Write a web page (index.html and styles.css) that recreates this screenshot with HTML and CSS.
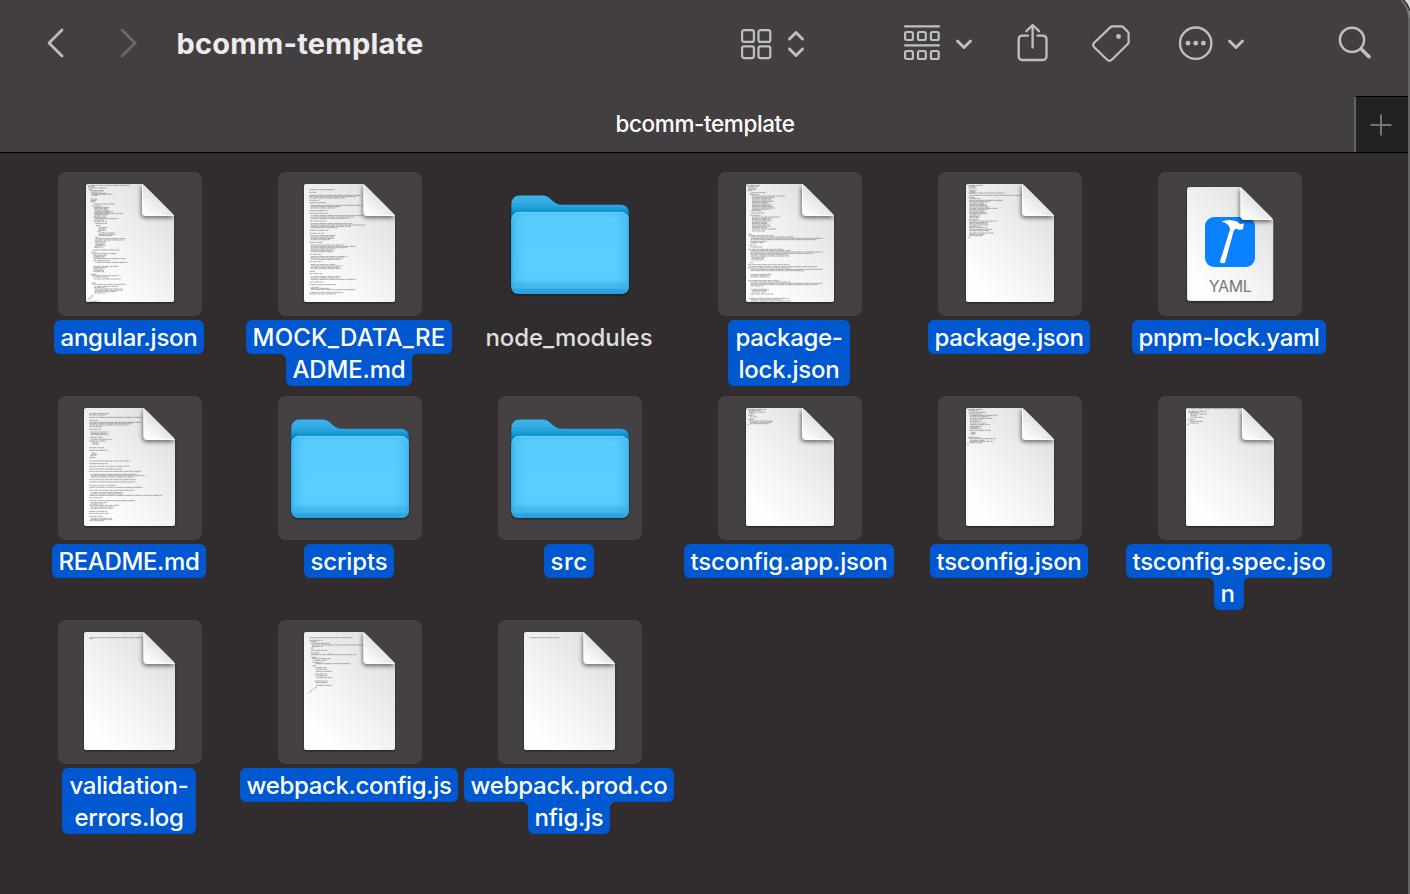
FILE: index.html
```html
<!DOCTYPE html>
<html lang="en">
<head>
<meta charset="utf-8">
<title>bcomm-template</title>
<link rel="stylesheet" href="styles.css">
</head>
<body>
<svg class="defs" width="0" height="0" aria-hidden="true">
  <defs>
    <linearGradient id="paper" x1="0.85" y1="0.15" x2="0.2" y2="0.9">
      <stop offset="0" stop-color="#e1e1e1"/><stop offset="0.5" stop-color="#f1f1f1"/><stop offset="1" stop-color="#fefefe"/>
    </linearGradient>
    <linearGradient id="curl" x1="0.1" y1="0.9" x2="0.55" y2="0.4">
      <stop offset="0" stop-color="#fdfdfd"/><stop offset="0.5" stop-color="#efefef"/><stop offset="1" stop-color="#dedede"/>
    </linearGradient>
    <linearGradient id="folderBack" x1="0" y1="0" x2="0" y2="1">
      <stop offset="0" stop-color="#3fb4ea"/><stop offset="0.1" stop-color="#2ba6e0"/><stop offset="0.18" stop-color="#0088cb"/><stop offset="1" stop-color="#0b8fd0"/>
    </linearGradient>
    <linearGradient id="folderFront" x1="0" y1="0" x2="0" y2="1">
      <stop offset="0" stop-color="#50c2f7"/><stop offset="0.08" stop-color="#5accff"/><stop offset="0.8" stop-color="#5ccdff"/><stop offset="0.87" stop-color="#50c1f5"/><stop offset="0.885" stop-color="#3fb1e8"/><stop offset="0.9" stop-color="#4bbbf0"/><stop offset="0.93" stop-color="#44b5ec"/><stop offset="0.945" stop-color="#2ba3df"/><stop offset="1" stop-color="#27a0dd"/>
    </linearGradient>
    <linearGradient id="folderEdge" x1="0" y1="0" x2="1" y2="0">
      <stop offset="0" stop-color="#2aa5e2" stop-opacity="0.8"/><stop offset="0.03" stop-color="#35b0ec" stop-opacity="0.4"/><stop offset="0.12" stop-color="#35b0ec" stop-opacity="0"/><stop offset="0.88" stop-color="#35b0ec" stop-opacity="0"/><stop offset="0.97" stop-color="#35b0ec" stop-opacity="0.4"/><stop offset="1" stop-color="#2aa5e2" stop-opacity="0.8"/>
    </linearGradient>
    <filter id="drop" x="-20%" y="-20%" width="140%" height="140%">
      <feDropShadow dx="0" dy="1.2" stdDeviation="1.2" flood-color="#000" flood-opacity="0.5"/>
    </filter>
    <filter id="curlShadow" x="-40%" y="-40%" width="180%" height="180%">
      <feDropShadow dx="-1" dy="2" stdDeviation="2.2" flood-color="#000" flood-opacity="0.55"/>
    </filter>
    <clipPath id="clipNarrow"><path d="M31 12H84.5L116 43.500V127a3 3 0 0 1-3 3H31a3 3 0 0 1-3-3V15a3 3 0 0 1 3-3z"/></clipPath>
    <clipPath id="clipWide"><path d="M29 12H85.500L117 43.500V127a3 3 0 0 1-3 3H29a3 3 0 0 1-3-3V15a3 3 0 0 1 3-3z"/></clipPath>
    <clipPath id="clipYaml"><path d="M32 15H82.500L115 47.500V126a3 3 0 0 1-3 3H32a3 3 0 0 1-3-3V18a3 3 0 0 1 3-3z"/></clipPath>
    <symbol id="narrow" viewBox="0 0 144 144">
      <path filter="url(#drop)" fill="url(#paper)" d="M30 12H83Q85 12 87 14L114.500 41.500Q116 43 116 45V128a2 2 0 0 1-2 2H30a2 2 0 0 1-2-2V14a2 2 0 0 1 2-2z"/>
    </symbol>
    <symbol id="narrow-curl" viewBox="0 0 144 144">
      <g clip-path="url(#clipNarrow)"><path filter="url(#curlShadow)" fill="url(#curl)" stroke="#fdfdfd" stroke-width="1" d="M84.500 12V40.500a3 3 0 0 0 3 3H117z"/></g>
    </symbol>
    <symbol id="wide" viewBox="0 0 144 144">
      <path filter="url(#drop)" fill="url(#paper)" d="M28 12H84Q86 12 88 14L115.500 41.500Q117 43 117 45V128a2 2 0 0 1-2 2H28a2 2 0 0 1-2-2V14a2 2 0 0 1 2-2z"/>
    </symbol>
    <symbol id="wide-curl" viewBox="0 0 144 144">
      <g clip-path="url(#clipWide)"><path filter="url(#curlShadow)" fill="url(#curl)" stroke="#fdfdfd" stroke-width="1" d="M86 12V40.500a3 3 0 0 0 3 3H118z"/></g>
    </symbol>
    <symbol id="folder" viewBox="0 0 144 144">
      <g filter="url(#drop)">
        <path fill="url(#folderBack)" d="M13.300 33Q13.300 23.500 22 23.500H45C53 23.500 54 32.800 64 32.800H122Q131 32.800 131 42V114Q131 122 122 122H22Q13.300 122 13.300 114z"/>
        <path fill="url(#folderFront)" d="M13.300 49Q13.300 40 22 40H122Q131 40 131 49V113Q131 122 122 122H22Q13.300 122 13.300 113z"/>
      </g>
      <path fill="url(#folderEdge)" d="M13.300 49Q13.300 40 22 40H122Q131 40 131 49V113Q131 122 122 122H22Q13.300 122 13.300 113z"/>
      <path fill="none" stroke="#7ad6fb" stroke-width="0.8" d="M14.500 46Q16 40.300 22 40.300H122Q128 40.300 129.800 46"/>
    </symbol>
  </defs>
</svg>

<div class="window">
  <header class="toolbar">
    <svg class="ico back" width="18" height="30" viewBox="0 0 18 30"><path d="M16 2L3 15L16 28" stroke-width="2.800"/></svg>
    <svg class="ico fwd" width="18" height="30" viewBox="0 0 18 30"><path d="M2 2L15 15L2 28" stroke-width="2.800"/></svg>
    <h1 class="title"><span data-width="247">bcomm-template</span></h1>
    <svg class="ico view" width="66" height="32" viewBox="0 0 66 32">
      <g stroke-width="2.200"><rect x="2.100" y="2.100" width="11.800" height="11.800" rx="2"/><rect x="18.500" y="2.100" width="11.800" height="11.800" rx="2"/><rect x="2.100" y="18.300" width="11.800" height="11.800" rx="2"/><rect x="18.500" y="18.300" width="11.800" height="11.800" rx="2"/></g>
      <path stroke-width="3" d="M49.500 11L56 4.500L62.500 11M49.500 21L56 27.500L62.500 21"/>
    </svg>
    <svg class="ico group" width="70" height="38" viewBox="0 0 70 38">
      <path stroke-width="2.200" d="M2 3.400H36M2 22.300H36"/>
      <g stroke-width="2.200"><rect x="2.100" y="9" width="7.800" height="8" rx="1.500"/><rect x="15" y="9" width="7.800" height="8" rx="1.500"/><rect x="27.900" y="9" width="7.800" height="8" rx="1.500"/><rect x="2.100" y="28" width="7.800" height="8" rx="1.500"/><rect x="15" y="28" width="7.800" height="8" rx="1.500"/><rect x="27.900" y="28" width="7.800" height="8" rx="1.500"/></g>
      <path stroke-width="3" d="M54.500 18L61 24.500L67.500 18"/>
    </svg>
    <svg class="ico share" width="32" height="40" viewBox="0 0 32 40">
      <path stroke-width="2.300" d="M11 12.700H5.500Q1.700 12.700 1.700 16.500V33Q1.700 37 5.500 37H25.500Q29.500 37 29.500 33V16.500Q29.500 12.700 25.500 12.700H20.500"/>
      <path stroke-width="2.300" d="M15.600 24.500V3M9.300 8.200L15.600 2L22 8.200"/>
    </svg>
    <svg class="ico tag" width="40" height="40" viewBox="0 0 40 40">
      <path stroke-width="2.200" d="M21.500 3.300H30.500Q31.500 3.300 32.300 4.100L36.800 8.700Q37.600 9.500 37.600 10.700V19Q37.600 20.200 36.800 21L20.800 36.800Q18.500 39 16.200 36.800L3.200 24.300Q1 22 3.200 19.700L19.500 4.100Q20.300 3.300 21.500 3.300z"/>
      <circle class="solid" cx="27.500" cy="13.500" r="2.400"/>
    </svg>
    <svg class="ico more" width="68" height="36" viewBox="0 0 68 36">
      <circle cx="17.700" cy="18.200" r="15.700" stroke-width="2.300"/>
      <g class="solid"><circle cx="10" cy="18.200" r="2.400"/><circle cx="17.700" cy="18.200" r="2.400"/><circle cx="25.400" cy="18.200" r="2.400"/></g>
      <path stroke-width="3" d="M51.500 16L58 22.500L64.500 16"/>
    </svg>
    <svg class="ico search" width="36" height="36" viewBox="0 0 36 36">
      <circle cx="15" cy="14.800" r="12.100" stroke-width="2.500"/><path stroke-width="3.600" d="M24.500 24.300L32 31.700"/>
    </svg>
  </header>
  <div class="tabs">
    <div class="tab"><span data-width="179">bcomm-template</span></div>
    <div class="newtab"><svg width="22" height="22" viewBox="0 0 22 22"><path d="M11 0.500V21.500M0.500 11H21.500"/></svg></div>
  </div>

  <main class="files">
    <figure class="file selected">
      <svg class="tile" viewBox="0 0 144 144" data-shape="narrow" data-lines="4 8 123;8 6 22;12 8 55;17 8 10;20 14 40 2;28 16 45;31 18 62;34 16 20;45 14 20 2;53 14 16;60 22 65;66 18 30;70 24 45 3;82 26 55 2;88 26 85;92 24 45 3;104 26 70;108 24 30;112 22 40;118 28 35;125 30 15;131 38 28 3;143 34 10;147 38 50 3;160 28 10;164 28 90 2;172 26 35;177 28 32 4;190 24 10;198 20 80;204 16 15;209 18 75;214 22 40 3;224 24 95;230 22 50;235 28 97;247 22 75;251 22 40 4;271 14 18;275 18 80;279 22 45;285 24 80;297 16 14;301 20 100;307 26 72;311 24 35;315 26 85 3;327 24 35;336 15 7;342 8 10;346 5 6;352 10 30"></svg>
      <figcaption><span class="line" data-width="150">angular.json</span></figcaption>
    </figure>
    <figure class="file selected">
      <svg class="tile" viewBox="0 0 144 144" data-shape="wide" data-lines="17 16 75;25 16 22;34 16 155;38 16 140 2;49 16 30;56 16 50;64 20 155;68 20 90 2;80 16 56;88 16 55;95 20 155;99 20 130 2;111 16 50;119 20 125;123 20 165;127 20 120;131 20 80;139 16 57;148 16 43;155 20 75 3;167 20 58;175 16 40;183 20 100;187 20 135;191 20 110;195 20 75 3;211 16 38;218 20 110;222 20 100 2;233 16 40;242 20 75;246 20 95 3;262 16 17;269 16 40;278 20 90 2;286 20 135;294 16 44;302 16 80;310 22 24;313 20 58;317 20 135;326 16 100;330 16 80"></svg>
      <figcaption><span class="line" data-width="206">MOCK_DATA_RE</span><span class="line joined" data-width="126">ADME.md</span></figcaption>
    </figure>
    <figure class="file">
      <svg class="tile" viewBox="0 0 144 144"><use href="#folder"/></svg>
      <figcaption><span class="line" data-width="180">node_modules</span></figcaption>
    </figure>
    <figure class="file selected">
      <svg class="tile" viewBox="0 0 144 144" data-shape="narrow" data-lines="4 4 38 2;12 6 24 2;20 4 15;26 14 45;31 10 30;36 18 98;40 18 68 10;80 16 30;87 16 40;94 14 30;99 18 86;103 18 60 8;135 18 75;141 18 40;151 8 10;155 8 76;159 14 130;163 14 216 2;172 14 50 2;183 10 20;189 14 35;196 8 105;200 14 120;204 14 216 2;212 14 115 2;220 16 42 3;236 12 10;242 6 125;248 8 206;252 4 130;256 14 216 2;271 14 62 3;290 6 94;294 14 120;298 14 216 2;306 14 38;316 14 55;320 18 45 2;330 14 68;343 8 120;347 14 92;351 14 120"></svg>
      <figcaption class="block"><span class="line" data-width="120">package-</span><span class="line" data-width="114">lock.json</span></figcaption>
    </figure>
    <figure class="file selected">
      <svg class="tile" viewBox="0 0 144 144" data-shape="narrow" data-lines="4 6 46;8 8 24 2;19 10 22 3;27 8 110;34 10 155;40 6 20;44 10 35;49 10 100;53 10 62 5;73 10 85;77 10 55 4;93 10 35 3;107 8 30;111 10 82;115 10 60 3;127 10 35;131 10 55;136 10 70;140 10 60;147 10 75;151 10 48 2;160 4 10"></svg>
      <figcaption><span class="line" data-width="162">package.json</span></figcaption>
    </figure>
    <figure class="file selected">
      <svg class="tile" viewBox="0 0 144 144">
        <path filter="url(#drop)" fill="url(#paper)" stroke="#fafafa" stroke-width="0.800" d="M31.500 15.500H81Q83 15.500 85 17.500L113 45.500Q114.700 47 114.700 49V126.500a2 2 0 0 1-2 2H31.500a2 2 0 0 1-2-2V17.500a2 2 0 0 1 2-2z"/>
        <rect x="47" y="45" width="50" height="50" rx="9" fill="#0a82ff"/>
        <path fill="#fff" d="M63.500 49.500Q71 46.500 79 49.500L82.300 52.300L86 51.200L85 57.300L81 58L78 56.500L75.800 58.500L67 90.800Q64 92 61.800 90L72 57.500Q71.500 51.500 63.500 49.500z"/>
        <text class="kind" x="72.300" y="120" textLength="43">YAML</text>
        <g clip-path="url(#clipYaml)"><path filter="url(#curlShadow)" fill="url(#curl)" stroke="#fdfdfd" stroke-width="1" d="M83 15V44a3 3 0 0 0 3 3.500H116z"/></g>
      </svg>
      <figcaption><span class="line" data-width="194">pnpm-lock.yaml</span></figcaption>
    </figure>

    <figure class="file selected">
      <svg class="tile" viewBox="0 0 144 144" data-shape="wide" data-lines="17 16 58 2;28 16 160;37 16 25;43 16 155;47 16 130 2;56 16 38;64 16 35;72 20 55 3;88 16 40;94 20 65;99 16 50;104 24 20 2;119 16 44;127 16 57;135 24 10;139 20 20 2;149 16 18;159 16 122;167 16 55;175 16 120;183 16 98;190 16 156;199 20 140;203 20 165 2;215 16 140;222 16 140;232 16 80;238 16 160;247 16 135;254 20 98 2;262 16 220;269 16 40;278 16 138;284 20 50 2;292 16 90;297 20 70 2;310 16 55;316 16 60;325 16 40;331 20 65 2;338 16 44"></svg>
      <figcaption><span class="line" data-width="154">README.md</span></figcaption>
    </figure>
    <figure class="file selected">
      <svg class="tile" viewBox="0 0 144 144"><use href="#folder"/></svg>
      <figcaption><span class="line" data-width="90">scripts</span></figcaption>
    </figure>
    <figure class="file selected">
      <svg class="tile" viewBox="0 0 144 144"><use href="#folder"/></svg>
      <figcaption><span class="line" data-width="50">src</span></figcaption>
    </figure>
    <figure class="file selected">
      <svg class="tile" viewBox="0 0 144 144" data-shape="narrow" data-lines="4 6 55;8 8 36;12 8 50;16 10 18;22 6 16;27 12 22;34 6 20;39 10 70;43 12 68 2;50 5 5"></svg>
      <figcaption><span class="line" data-width="210">tsconfig.app.json</span></figcaption>
    </figure>
    <figure class="file selected">
      <svg class="tile" viewBox="0 0 144 144" data-shape="narrow" data-lines="4 6 45;8 8 30;13 10 50;18 8 40;22 12 82;26 12 55;31 12 68;36 10 40;40 12 30;45 12 50;50 12 60;55 12 35 2;62 12 35;67 10 65;73 14 15 2;79 16 10;88 6 35;92 10 80;97 12 45;100 12 68;104 10 40;110 3 5"></svg>
      <figcaption><span class="line" data-width="158">tsconfig.json</span></figcaption>
    </figure>
    <figure class="file selected">
      <svg class="tile" viewBox="0 0 144 144" data-shape="narrow" data-lines="2 8 160;10 6 56;14 10 30;18 12 50;23 14 18;28 14 38;35 6 22;40 12 38;45 10 30;49 4 5"></svg>
      <figcaption><span class="line" data-width="206">tsconfig.spec.jso</span><span class="line joined" data-width="30">n</span></figcaption>
    </figure>

    <figure class="file selected">
      <svg class="tile" viewBox="0 0 144 144" data-shape="wide" data-lines="17 16 160;20 18 8"></svg>
      <figcaption class="block"><span class="line" data-width="132">validation-</span><span class="line" data-width="122">errors.log</span></figcaption>
    </figure>
    <figure class="file selected">
      <svg class="tile" viewBox="0 0 144 144" data-shape="wide" data-lines="17 16 130;25 16 40;29 20 20;34 22 55;39 22 160;43 24 30;48 20 10;55 20 50;63 20 28;68 22 135;76 20 20;80 24 55;85 28 40;91 26 30;95 34 105;101 26 10;107 32 36;112 36 34;118 36 48;126 32 36;131 36 34;137 36 48;147 32 38;152 36 34;160 36 48;166 33 5;171 27 5;176 20 5;181 15 5"><rect class="mark" x="50.500" y="33.500" width="3" height="1"/></svg>
      <figcaption><span class="line" data-width="218">webpack.config.js</span></figcaption>
    </figure>
    <figure class="file selected">
      <svg class="tile" viewBox="0 0 144 144" data-shape="wide" data-lines="17 16 90"></svg>
      <figcaption><span class="line" data-width="210">webpack.prod.co</span><span class="line joined" data-width="82">nfig.js</span></figcaption>
    </figure>
  </main>
  <svg class="corner" width="12" height="18" viewBox="0 0 12 18"><path class="outside" d="M5 0H12V18Q12 7 5 0z"/><path class="rim" d="M3 0Q10.500 7 11 18"/><path class="dark" d="M5.500 0Q10 4 12 11"/></svg>
</div>
<script src="script.js"></script>
</body>
</html>
```
FILE: styles.css
```css
* { box-sizing: border-box; }

body {
  margin: 0;
  background: #312d2e;
  font-family: Inter, "Liberation Sans", sans-serif;
  overflow: hidden;
}

.defs { position: absolute; }

.window {
  position: relative;
  display: flex;
  flex-direction: column;
  width: 1410px;
  height: 894px;
  background: #312d2e;
  border-right: 2px solid #656263;
}

.toolbar {
  display: flex;
  align-items: flex-start;
  height: 96px;
  background: #433f40;
}

.ico {
  flex: none;
  fill: none;
  stroke: #c1bebf;
  stroke-linecap: round;
  stroke-linejoin: round;
}
.solid { fill: #c1bebf; stroke: none; }

.back { margin: 28px 0 0 45.500px; }
.fwd { margin: 28px 0 0 56px; stroke: #6c696a; }
.title {
  width: 250px;
  margin: 26px 0 0 39px;
  color: #ececec;
  font-size: 29px;
  font-weight: 700;
  line-height: 36px;
  white-space: nowrap;
}
.view { margin: 28px 0 0 313.500px; }
.group { margin: 23px 0 0 97px; }
.share { margin: 23px 0 0 44px; }
.tag { margin: 23px 0 0 42px; }
.more { margin: 25px 0 0 47px; }
.search { margin: 25px 0 0 91px; }

.tabs {
  display: flex;
  height: 57px;
  background: #433f40;
  border-bottom: 1px solid #000;
}
.tab {
  width: 1354px;
  padding: 12px 0 0 56px;
  color: #fff;
  font-size: 22.500px;
  font-weight: 500;
  line-height: 32px;
  text-align: center;
}
.newtab {
  display: grid;
  flex: 1;
  place-items: center;
  padding-right: 2px;
  background: #242122;
  border-top: 1px solid #000;
  border-left: 2px solid #656263;
}
.newtab svg { fill: none; stroke: #757273; stroke-width: 2; }

.files {
  display: grid;
  grid-template-columns: repeat(6, 220px);
  grid-auto-rows: 224px;
  padding: 19px 0 0 20px;
}

.file {
  display: flex;
  flex-direction: column;
  align-items: center;
  gap: 4px;
  margin: 0;
  color: #dededd;
}
.tile {
  flex: none;
  width: 144px;
  height: 144px;
  border-radius: 8px;
}
.selected .tile { background: #454142; }

.code { fill: none; stroke: #555; stroke-width: 1; opacity: 0.480; }
.mark { fill: #5fd35f; }
.kind {
  fill: #77777a;
  font-size: 16px;
  font-weight: 400;
  text-anchor: middle;
}

figcaption {
  display: flex;
  flex-direction: column;
  align-items: center;
  margin-right: 2px;
  font-size: 24px;
  font-weight: 500;
  line-height: 32px;
}
.line {
  position: relative;
  height: 34px;
  padding: 2px 0 0 6.500px;
  border-radius: 6px;
  white-space: nowrap;
}
.selected { color: #fff; }
.selected .line { background: #0058d0; }
.line.joined {
  height: 32px;
  padding-top: 0;
  line-height: 32px;
  border-radius: 0 0 6px 6px;
}
.joined::before,
.joined::after {
  content: "";
  position: absolute;
  top: 0;
  width: 5px;
  height: 5px;
}
.joined::before {
  right: 100%;
  background: radial-gradient(circle at 0 100%, transparent 4.500px, #0058d0 5px);
}
.joined::after {
  left: 100%;
  background: radial-gradient(circle at 100% 100%, transparent 4.500px, #0058d0 5px);
}

.block {
  height: 66px;
  padding: 0 1px;
  border-radius: 6px;
  background: #0058d0;
}
.block .line { height: 32px; }

.corner {
  position: absolute;
  top: 0;
  right: -2px;
  fill: none;
}
.corner .outside { fill: #d9d9dc; }
.corner .rim { stroke: #777475; stroke-width: 1.600; }
.corner .dark { stroke: #171617; stroke-width: 1.200; }
```
FILE: script.js
```js
const SVG_NS = "http://www.w3.org/2000/svg";

function element(name, attributes) {
  const node = document.createElementNS(SVG_NS, name);
  for (const key in attributes) node.setAttribute(key, attributes[key]);
  return node;
}

// Thumbnail lines are "y x width [repeat]" in thirds of a pixel from the page corner.
document.querySelectorAll(".tile[data-lines]").forEach((tile) => {
  const shape = tile.dataset.shape;
  const left = shape === "wide" ? 26 : 28;
  const clip = shape === "wide" ? "clipWide" : "clipNarrow";
  const dashes = ["3 .5 1.5 .4 4 .6", "1.5 .5 5 .4", "2.4 .7 3.5 .4 1 .5", "6 .5 2 .6"];
  const group = element("g", { class: "code", "clip-path": `url(#${clip})` });
  let seed = 0;
  tile.dataset.lines.split(";").forEach((entry) => {
    const [y, x, width, repeat = 1] = entry.trim().split(" ").map(Number);
    for (let i = 0; i < repeat; i++) {
      seed++;
      const length = width * (i ? 0.72 + ((seed * 37) % 30) / 100 : 1);
      const startX = left + x / 3;
      const lineY = 12 + (y + i * 4) / 3;
      group.append(element("path", {
        d: `M${startX.toFixed(2)} ${lineY.toFixed(2)}h${(length / 3).toFixed(2)}`,
        "stroke-dasharray": dashes[seed % dashes.length],
      }));
    }
  });
  tile.prepend(element("use", { href: `#${shape}` }), group);
  tile.append(element("use", { href: `#${shape}-curl` }));
});

// Spread each label's letters over the width it is given.
document.querySelectorAll("[data-width]").forEach((label) => {
  const inset = label.classList.contains("line") ? 13 : 0;
  const target = Number(label.dataset.width) - inset;
  const range = document.createRange();
  range.selectNodeContents(label);
  const natural = range.getBoundingClientRect().width;
  label.style.letterSpacing = `${(target - natural) / label.textContent.length}px`;
  if (inset) label.style.width = `${label.dataset.width}px`;
});
```
